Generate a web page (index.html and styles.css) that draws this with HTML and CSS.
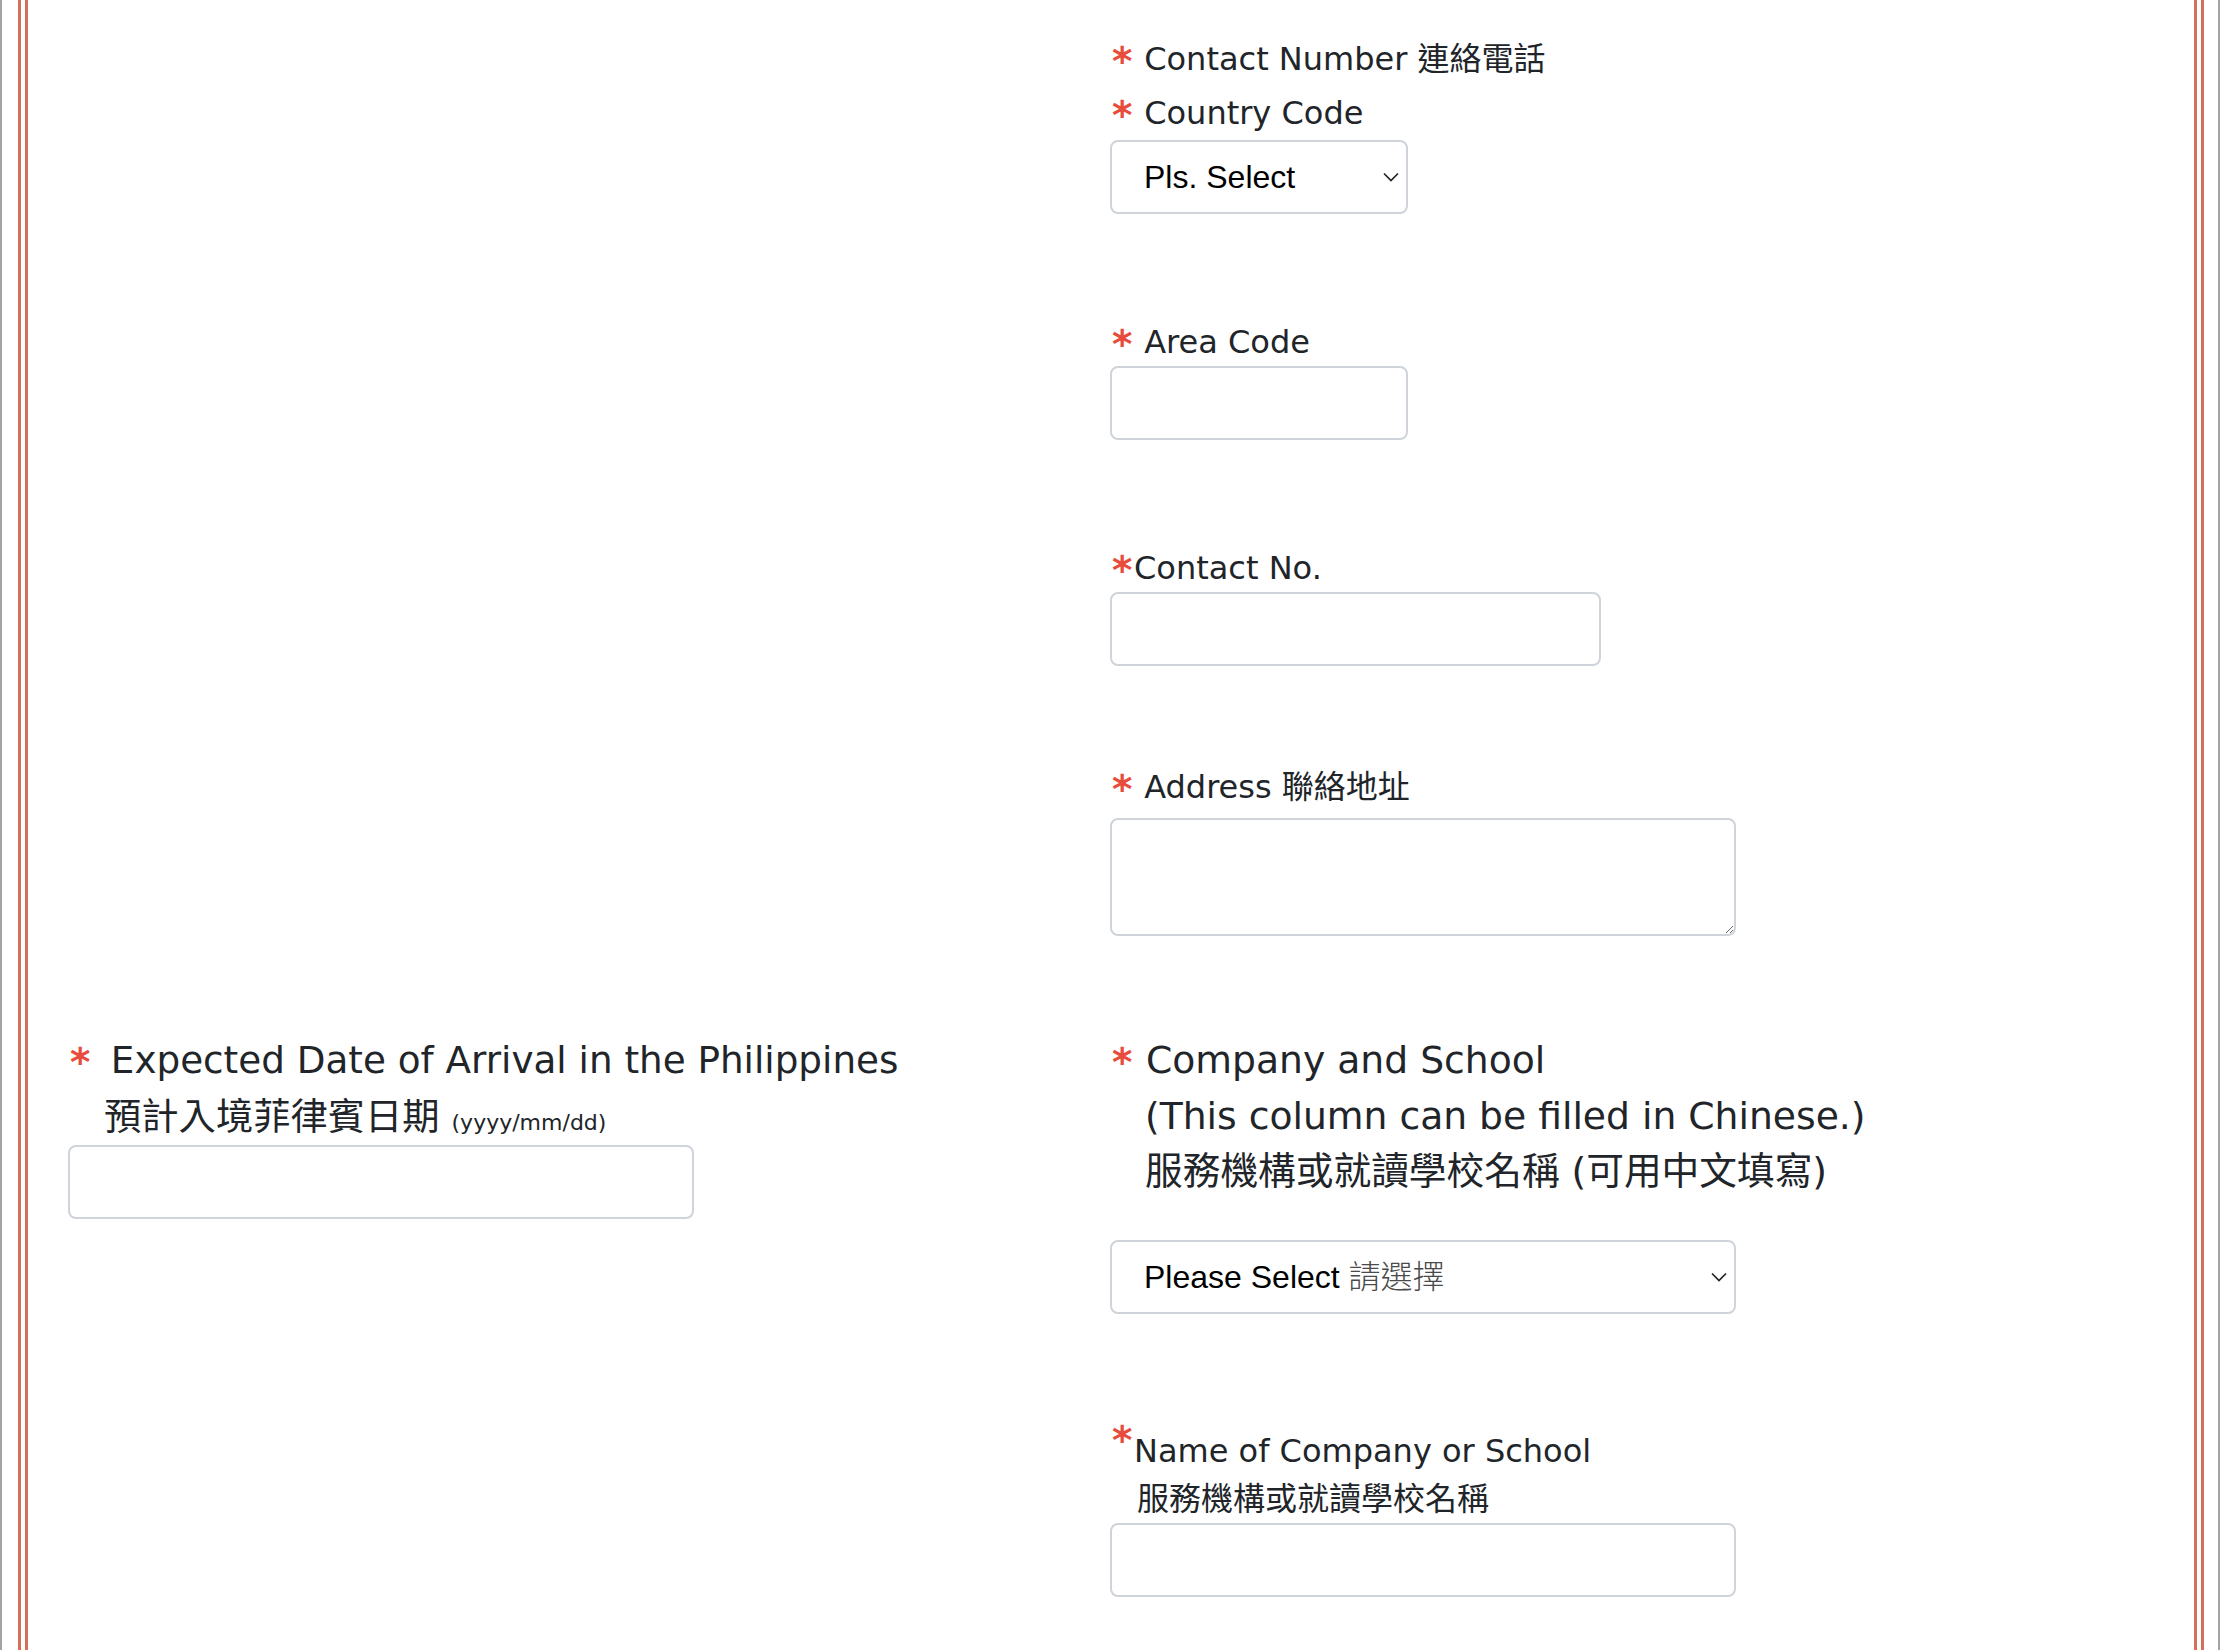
FILE: index.html
```html
<!DOCTYPE html>
<html lang="en">
<head>
<meta charset="utf-8">
<title>Application Form</title>
<link rel="stylesheet" href="styles.css">
</head>
<body>
<div class="frame">
  <div class="card">
    <div class="grid">
      <div class="cell"></div>

      <div class="cell contact">
        <div class="top-label"><span class="req">*</span> Contact Number 連絡電話</div>
        <div class="top-label second"><span class="req">*</span> Country Code</div>
        <div class="select w-sm">
          <span class="sel-text">Pls. Select</span>
          <svg class="chev" width="16" height="10" viewBox="0 0 16 10"><polyline points="1,1.5 8,8.5 15,1.5" fill="none" stroke="#222" stroke-width="1.7"/></svg>
        </div>

        <div class="group">
          <label class="lbl"><span class="req">*</span> Area Code</label>
          <input class="ctl w-sm" type="text">
        </div>

        <div class="group">
          <label class="lbl"><span class="req">*</span>Contact No.</label>
          <input class="ctl w-md" type="text">
        </div>

        <div class="group addr">
          <label class="lbl"><span class="req">*</span> Address 聯絡地址</label>
          <textarea class="ctl ta w-lg"></textarea>
        </div>
      </div>

      <div class="cell arrival">
        <div class="big-line first"><span class="req big">*</span> Expected Date of Arrival in the Philippines</div>
        <div class="big-line sub">預計入境菲律賓日期 <small class="fmt">(yyyy/mm/dd)</small></div>
        <input class="ctl w-lg" type="text">
      </div>

      <div class="cell company">
        <div class="hang big-block"><span class="req big">*</span> Company and School<br>(This column can be filled in Chinese.)<br>服務機構或就讀學校名稱 (可用中文填寫)</div>
        <div class="select w-lg sel-gap">
          <span class="sel-text">Please Select <span class="sel-cjk">請選擇</span></span>
          <svg class="chev" width="16" height="10" viewBox="0 0 16 10"><polyline points="1,1.5 8,8.5 15,1.5" fill="none" stroke="#222" stroke-width="1.7"/></svg>
        </div>
        <div class="hang name-block"><span class="req sup">*</span>Name of Company or School<br>服務機構或就讀學校名稱</div>
        <input class="ctl w-lg" type="text">
      </div>
    </div>
  </div>
</div>
</body>
</html>
```

FILE: styles.css
```css
html, body {
  margin: 0;
  padding: 0;
  background: #fff;
  overflow: hidden;
}

body {
  font-family: "DejaVu Sans", "Noto Sans CJK TC", sans-serif;
  font-size: 32px;
  color: #212529;
}

.frame {
  width: 2220px;
  min-height: 1650px;
  box-sizing: border-box;
  border-left: 2px solid #a4a4a4;
  border-right: 2px solid #a4a4a4;
  padding: 0 14px 0 16px;
}

.card {
  min-height: 1650px;
  box-sizing: border-box;
  border-left: 10px double #d56f58;
  border-right: 10px double #d56f58;
}

.grid {
  display: grid;
  grid-template-columns: 1042px 626px;
  row-gap: 97px;
  padding-left: 40px;
}

.cell {
  display: flex;
  flex-direction: column;
  align-items: flex-start;
}

/* required asterisk */
.req {
  display: inline-block;
  width: 24px;
  box-sizing: border-box;
  padding-left: 2px;
  font-size: 39px;
  font-weight: bold;
  line-height: 0;
  color: #e84c3d;
  vertical-align: -5px;
  text-indent: 0;
}
.req.big { vertical-align: -3px; }
.req.sup { vertical-align: 8px; }

/* contact column */
.contact { padding-top: 32px; }

.top-label {
  line-height: 54px;
  white-space: nowrap;
}
.top-label.second {
  padding-top: 1px;
  line-height: 53px;
}

.group {
  margin-top: 104px;
  display: flex;
  flex-direction: column;
  align-items: flex-start;
}
.group.addr { margin-top: 97px; }
.group.addr .lbl { margin-bottom: 7px; }

.lbl {
  display: block;
  line-height: 48px;
  white-space: nowrap;
}

/* controls */
.ctl {
  display: block;
  box-sizing: border-box;
  height: 74px;
  margin: 0;
  border: 2px solid #ced4da;
  border-radius: 8px;
  background: #fff;
  font: 32px "Liberation Sans", sans-serif;
  padding: 0 24px;
  outline: none;
}

.ta { height: 118px; }

.w-sm { width: 298px; }
.w-md { width: 491px; }
.w-lg { width: 626px; }

.select {
  position: relative;
  box-sizing: border-box;
  height: 74px;
  border: 2px solid #ced4da;
  border-radius: 8px;
  background: #fff;
  display: flex;
  align-items: center;
  padding-left: 32px;
  font-family: "Liberation Sans", "Noto Sans CJK TC", sans-serif;
  font-size: 32px;
  line-height: 40px;
  color: #000;
}

.sel-text { white-space: nowrap; }
.sel-cjk { color: #4a4a4a; font-weight: 300; }

.chev {
  position: absolute;
  right: 7px;
  top: 50%;
  margin-top: -5px;
}

/* arrival (left) */
.big-line {
  font-size: 37.3px;
  white-space: nowrap;
}
.big-line.first { line-height: 55.5px; }
.big-line.first .req { margin-right: 7px; }
.big-line.sub {
  line-height: 48px;
  margin: 4px 0 4px;
  padding-left: 36px;
}
.fmt { font-size: 22px; line-height: 1; }

/* company (right) */
.hang { white-space: nowrap; }

.big-block {
  font-size: 37.7px;
  line-height: 55.5px;
  padding-left: 35px;
  text-indent: -35px;
}

.sel-gap { margin-top: 40px; }

.name-block {
  margin-top: 113px;
  line-height: 48px;
  padding-left: 27px;
  text-indent: -27px;
}
```
